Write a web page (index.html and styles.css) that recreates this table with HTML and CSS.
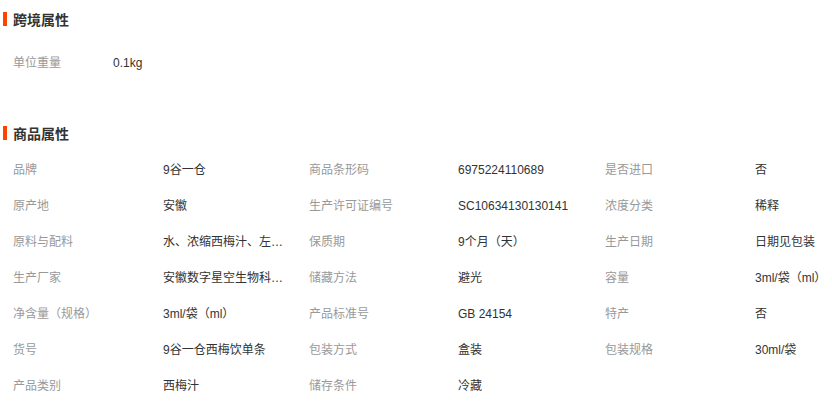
FILE: index.html
```html
<!DOCTYPE html>
<html lang="zh-CN">
<head>
    <meta charset="UTF-8">
    <meta name="viewport" content="width=device-width, initial-scale=1.0">
    <title>商品属性</title>
    <link rel="stylesheet" href="styles.css">
</head>
<body>
    <section class="attr attr-cross">
        <h2 class="attr-title">跨境属性</h2>
        <ul class="attr-list attr-single">
            <li><span class="label">单位重量</span><span class="value">0.1kg</span></li>
        </ul>
    </section>
    <section class="attr attr-goods">
        <h2 class="attr-title">商品属性</h2>
        <ul class="attr-list">
            <li><span class="label">品牌</span><span class="value">9谷一仓</span></li>
            <li><span class="label">商品条形码</span><span class="value">6975224110689</span></li>
            <li><span class="label">是否进口</span><span class="value">否</span></li>
            <li><span class="label">原产地</span><span class="value">安徽</span></li>
            <li><span class="label">生产许可证编号</span><span class="value">SC10634130130141</span></li>
            <li><span class="label">浓度分类</span><span class="value">稀释</span></li>
            <li><span class="label">原料与配料</span><span class="value" title="水、浓缩西梅汁、左旋肉碱、菊粉">水、浓缩西梅汁、左…</span></li>
            <li><span class="label">保质期</span><span class="value">9个月（天）</span></li>
            <li><span class="label">生产日期</span><span class="value">日期见包装</span></li>
            <li><span class="label">生产厂家</span><span class="value" title="安徽数字星空生物科技有限公司">安徽数字星空生物科…</span></li>
            <li><span class="label">储藏方法</span><span class="value">避光</span></li>
            <li><span class="label">容量</span><span class="value">3ml/袋（ml）</span></li>
            <li><span class="label">净含量（规格）</span><span class="value">3ml/袋（ml）</span></li>
            <li><span class="label">产品标准号</span><span class="value">GB 24154</span></li>
            <li><span class="label">特产</span><span class="value">否</span></li>
            <li><span class="label">货号</span><span class="value">9谷一仓西梅饮单条</span></li>
            <li><span class="label">包装方式</span><span class="value">盒装</span></li>
            <li><span class="label">包装规格</span><span class="value">30ml/袋</span></li>
            <li><span class="label">产品类别</span><span class="value">西梅汁</span></li>
            <li><span class="label">储存条件</span><span class="value">冷藏</span></li>
        </ul>
    </section>
</body>
</html>
```

FILE: styles.css
```css
/* 초기화 */
* {box-sizing: border-box;}
body, h2, ul {margin: 0; padding: 0;}
li {list-style: none;}
body {
    overflow: hidden;
    background: #fff;
    color: #333;
    font-family: "Liberation Sans", "Noto Sans CJK SC", sans-serif;
    font-size: 12px;
}
/* 제목 */
.attr-title {
    display: flex;
    align-items: center;
    height: 20px;
    padding-left: 3px;
    font-size: 14px;
    font-weight: bold;
    color: #333;
}
.attr-title::before {
    content: "";
    width: 4px; height: 14px;
    margin-right: 6px;
    background: #ff4400;
}
.attr-cross {padding-top: 9px;}
.attr-cross .attr-list {margin-top: 16px;}
.attr-goods {margin-top: 42px;}
.attr-goods .attr-list {margin-top: 9px;}
/* 목록 (라벨+값 3쌍) */
.attr-list {
    display: grid;
    grid-template-columns: 296px 296px 1fr;
    padding-left: 13px;
}
.attr-list li {
    display: grid;
    grid-template-columns: 150px 146px;
    height: 36px;
    line-height: 36px;
}
.attr-list li:nth-child(3n+2) {grid-template-columns: 149px 147px;}
.attr-list li:nth-child(3n) {grid-template-columns: 150px 1fr;}
.attr-single {grid-template-columns: 1fr;}
.attr-single li {grid-template-columns: 100px 1fr;}
.label {color: #999;}
.value {
    white-space: nowrap;
    color: #333;
}
```
